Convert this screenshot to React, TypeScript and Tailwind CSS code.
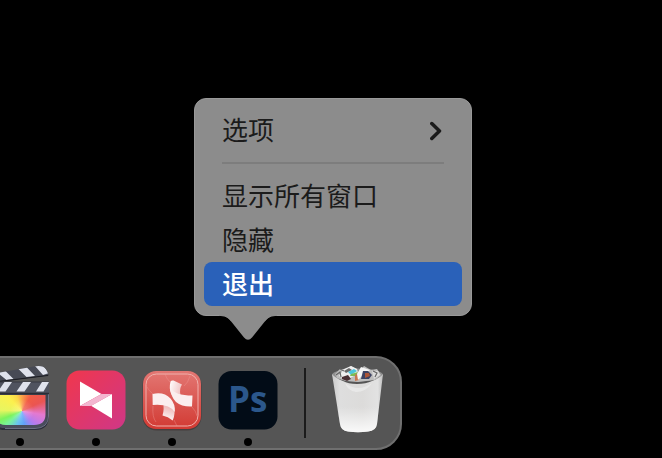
import type { ReactNode } from "react";

function FinalCutIcon() {
    return (
        <svg viewBox="0 0 76 76" className="h-[76px] w-[76px]" aria-hidden="true">
            <defs>
                <linearGradient id="slate" x1="0" y1="0" x2="0" y2="1">
                    <stop offset="0" stopColor="#3a3d48" />
                    <stop offset="1" stopColor="#4a4e5e" />
                </linearGradient>
                <clipPath id="arm">
                    <path d="M9 12L52 4.500Q61 3 64 7L66.500 12.500L66 14L9 21z" />
                </clipPath>
                <clipPath id="screen">
                    <path d="M13 33H63.500V52Q63.500 63 52 63H24Q13 63 13 52z" />
                </clipPath>
            </defs>
            <path d="M9 20H67V54Q67 68 53 68H23Q9 68 9 54z" fill="#2b2e3a" />
            <path d="M10 20H66V54Q66 66 53 66H23Q10 66 10 54z" fill="url(#slate)" />
            <path d="M66.500 30V54Q66.500 66 53 66.500H23" fill="none" stroke="#6c7084" strokeWidth="1" />
            <g clipPath="url(#arm)">
                <rect x="9" y="3" width="59" height="19" fill="#474a55" />
                <path d="M14 9.500L22 7.500L31.500 17L24.500 18zM35.500 6L44 4.500L53 14L44.500 15zM53 4L60.500 3L67 11L61 13z" fill="#dfe2ec" />
                <path d="M9 20.500L67 13.500" stroke="#1d1e24" strokeWidth="1.500" />
            </g>
            <rect x="9" y="20" width="58" height="11" fill="#50535f" />
            <path d="M9 20H67" stroke="#363842" strokeWidth="1" />
            <path d="M22.500 20H30L23.500 29.500H16zM41 20H49L42.500 29.500H34.500zM60 20H67L61.500 29.500H54z" fill="#dfe2ec" />
            <path d="M9 31.500H67" stroke="#2b2d36" strokeWidth="1.500" />
            <foreignObject x="13" y="33" width="51" height="31" clipPath="url(#screen)">
                <div className="h-full w-full bg-[radial-gradient(circle_at_27px_16px,#ffffff44,#ffffff00_12px),conic-gradient(from_0deg_at_27px_16px,#fba24a,#f25c45_30deg,#ea5552_65deg,#e479d0_100deg,#b57bef_135deg,#62a0fa_170deg,#69c4f0_200deg,#79f39a_230deg,#7bf35c_248deg,#e8f560_272deg,#fcf04e_315deg,#fbd748_340deg,#fba24a)]"></div>
            </foreignObject>
        </svg>
    );
}

function RibbonIcon() {
    return (
        <svg viewBox="0 0 76 76" className="h-[76px] w-[76px]" aria-hidden="true">
            <defs>
                <linearGradient id="rose" x1="0" y1="0" x2="1" y2="1">
                    <stop offset="0" stopColor="#f0374c" />
                    <stop offset="1" stopColor="#cf3787" />
                </linearGradient>
            </defs>
            <rect x="8.500" y="8.500" width="59" height="59" rx="13" fill="url(#rose)" />
            <path d="M22 19.500L43.500 32L22 44z" fill="#fff" />
            <path d="M54 32V56.500L33 43.700z" fill="#fff" />
            <path d="M43.500 32H54L33 44H22z" fill="#f3b6d0" />
        </svg>
    );
}

function XmindIcon() {
    return (
        <svg viewBox="0 0 76 76" className="h-[76px] w-[76px]" aria-hidden="true">
            <defs>
                <linearGradient id="coral" x1="0" y1="0" x2="0" y2="1">
                    <stop offset="0" stopColor="#e37773" />
                    <stop offset="1" stopColor="#d23a33" />
                </linearGradient>
                <linearGradient id="foldTop" x1="0" y1="0" x2="1" y2="0.400">
                    <stop offset="0" stopColor="#ffffff" />
                    <stop offset="1" stopColor="#f0c4c4" />
                </linearGradient>
                <linearGradient id="foldBottom" x1="0" y1="1" x2="0.200" y2="0">
                    <stop offset="0" stopColor="#ffffff" />
                    <stop offset="1" stopColor="#eaa9a8" />
                </linearGradient>
            </defs>
            <rect x="8.500" y="9" width="59" height="59.500" rx="14" fill="#3a2a2a" opacity="0.500" />
            <rect x="9" y="9" width="58" height="58" rx="13" fill="url(#coral)" />
            <rect x="12" y="12" width="52" height="52" rx="10.500" fill="none" stroke="#efb0ac" strokeWidth="1" />
            <path d="M31 12Q32 16 36 20M50 24Q54 21 56 14M13 25Q15 29 19 32M58 45Q62 49 63 54M19 44Q18 55 22 60M40 58L43 64" fill="none" stroke="#f0a09c" strokeWidth="0.600" opacity="0.600" />
            <path d="M36.500 19.500Q37.500 18 39.500 18.500L48 22.500Q45 27 46.500 33L46 38Q33 35 36.500 19.500z" fill="url(#foldTop)" />
            <path d="M36.300 26Q41 33.500 58.500 33.500L58 44.500Q48 45 42 40Q37 35.500 36.300 26z" fill="#fbeeee" />
            <path d="M29 40L39.500 43Q42 51 38.700 58.500Q34 54.500 28.500 53.500Q30.500 47 29 40z" fill="url(#foldBottom)" />
            <path d="M18.500 32Q30 29.500 36.500 36.500Q41.500 42 40.800 50Q35 41.500 18.700 43z" fill="#fbeeee" />
        </svg>
    );
}

function PhotoshopIcon() {
    return (
        <svg viewBox="0 0 76 76" className="h-[76px] w-[76px]" aria-hidden="true">
            <rect x="8.500" y="9" width="59" height="58.500" rx="13" fill="#020c17" />
            <text x="18" y="50" fill="#2b578b" className="font-['Open_Sans',sans-serif] text-[35px] font-bold">Ps</text>
        </svg>
    );
}

function TrashIcon() {
    return (
        <svg viewBox="0 0 52 76" className="h-[76px] w-[52px]" aria-hidden="true">
            <defs>
                <linearGradient id="bin" x1="0" y1="0" x2="1" y2="0">
                    <stop offset="0" stopColor="#c9c9c9" />
                    <stop offset="0.150" stopColor="#dedede" />
                    <stop offset="0.600" stopColor="#dcdbda" />
                    <stop offset="0.900" stopColor="#e2e2e2" />
                    <stop offset="1" stopColor="#bdbdbd" />
                </linearGradient>
                <linearGradient id="binBase" x1="0" y1="0" x2="0" y2="1">
                    <stop offset="0" stopColor="#fff" stopOpacity="0" />
                    <stop offset="1" stopColor="#fff" stopOpacity="0.850" />
                </linearGradient>
            </defs>
            <ellipse cx="25.500" cy="13" rx="25.500" ry="6.500" fill="#8f8f8f" />
            <path d="M0 12Q3 16 11 19Q16 22 25 22Q34 22 40 19Q48 16 51 12L45 62Q44 69 36 69.500Q26 71 16 69.500Q9 69 8 62z" fill="url(#bin)" />
            <path d="M5 45H47L45 62Q44 69 36 69.500Q26 71 16 69.500Q9 69 8 62z" fill="url(#binBase)" />
            <path d="M13 21Q26 31 40 21Q34 30 24 30Q16 29 13 21z" fill="#f0f0f0" opacity="0.600" />
            <path d="M3 12L8 7L14 7L19 4L25 7L26 11L32 4L39 8L45 7L49 13L43 18L34 19L26 20L14 19L5 16z" fill="#bdbdbd" />
            <path d="M7 14L12 7L19 4L25 7L26 12L14 18z" fill="#eeeeee" />
            <path d="M12 9L17 6L20 8L14 11z" fill="#6a6a6a" />
            <path d="M16 10L22 7L25 9L19 13z" fill="#4cc4dc" />
            <path d="M19 12L26 10L24 14L18 14z" fill="#7dbb55" />
            <path d="M10 15L16 13L19 17L15 19L10 17z" fill="#4a3034" />
            <path d="M23 13L26 11L27 18L23 19z" fill="#c9764f" />
            <path d="M25 12L29 5L38 8L30 14L26 18z" fill="#f5f5f5" />
            <path d="M31 9L36 9L40 13L37 17L29 17z" fill="#3d4262" />
            <path d="M33 11L37 11L38 14L33 16z" fill="#ab5436" />
            <path d="M40 9L46 9L48 13L42 17z" fill="#dcdcdc" />
            <path d="M41 9L45 11L43 15M4 13L8 10L9 15M8 7L12 9" fill="none" stroke="#666" strokeWidth="1.200" />
        </svg>
    );
}

function DockItem({ label, children }: { label: string; children: ReactNode }) {
    return (
        <button type="button" aria-label={label} className="flex w-[76px] shrink-0 flex-col items-center">
            {children}
            <span className="h-2 w-2 rounded-full bg-black"></span>
        </button>
    );
}

function MenuItem({ active, children }: { active?: boolean; children: ReactNode }) {
    return (
        <button
            type="button"
            role="menuitem"
            className={
                active
                    ? "flex h-11 w-full items-center justify-between rounded-lg bg-[#2a61b9] px-[18px] pb-0.5 text-left font-medium text-white"
                    : "flex h-11 w-full items-center justify-between rounded-lg px-[18px] pb-0.5 text-left text-[#1b1b1b]"
            }
        >
            {children}
        </button>
    );
}

export default function App() {
    return (
        <div className="flex min-h-screen flex-col items-start justify-end gap-4 overflow-hidden bg-black pb-2 font-['Noto_Sans_CJK_SC',sans-serif]">
            <div className="ml-[194px]">
                <div role="menu" className="w-[278px] rounded-xl border border-[#999999] bg-[#8c8c8c] p-[9px] text-[26px] leading-9">
                    <MenuItem>
                        选项
                        <svg viewBox="0 0 14 22" className="mt-1 h-[22px] w-3.5" fill="none" stroke="#1b1b1b" strokeWidth="3.500" strokeLinecap="round" strokeLinejoin="round" aria-hidden="true">
                            <path d="M1.800 3.500L9.500 11L1.800 18.500" />
                        </svg>
                    </MenuItem>
                    <hr className="mx-[18px] my-[10px] border-t-2 border-[#7d7d7d]" />
                    <MenuItem>显示所有窗口</MenuItem>
                    <MenuItem>隐藏</MenuItem>
                    <MenuItem active>退出</MenuItem>
                </div>
                <svg viewBox="0 0 58 26" className="relative -mt-0.5 ml-[25px] h-[26px] w-[58px]" aria-hidden="true">
                    <path d="M6 0V2.500C9 3.500 11 6 13 8.500L25 23.500Q29 28 33 23.500L45 8.500C47 6 49 3.500 52 2.500V0z" fill="#8c8c8c" />
                    <path d="M0 1H58V2C53 2 49 3 46 7H12C9 3 5 2 0 2z" fill="#8c8c8c" />
                </svg>
            </div>

            <div className="-ml-12 flex rounded-[26px] border-2 border-[#6f6f6f] bg-[#555555] pt-1 pr-4 pl-7">
                <DockItem label="Final Cut Pro"><FinalCutIcon /></DockItem>
                <DockItem label="Video"><RibbonIcon /></DockItem>
                <DockItem label="Xmind"><XmindIcon /></DockItem>
                <DockItem label="Photoshop"><PhotoshopIcon /></DockItem>
                <div className="mt-1.5 mr-[26px] mb-2.5 ml-[18px] w-0.5 bg-[#1b1b1b]"></div>
                <button type="button" aria-label="Trash" className="flex flex-col pb-2.5">
                    <TrashIcon />
                </button>
            </div>
        </div>
    );
}
